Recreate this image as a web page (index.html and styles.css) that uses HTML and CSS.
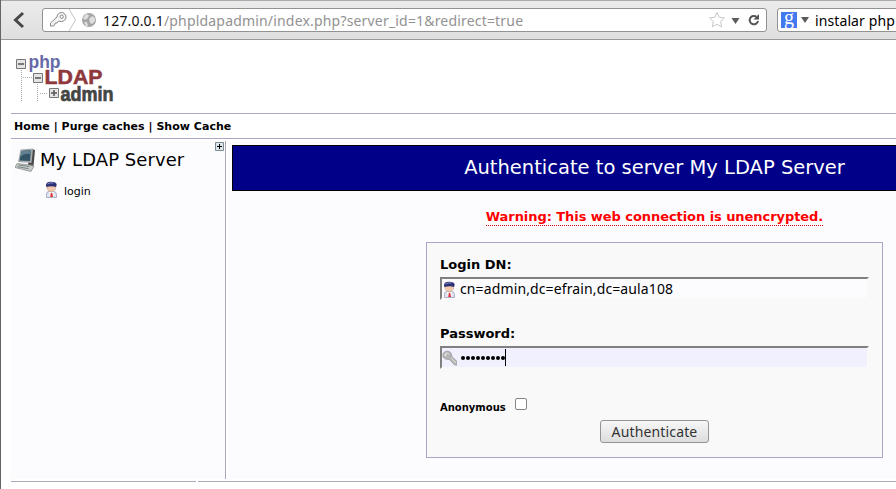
FILE: index.html
```html
<!DOCTYPE html>
<html lang="en">
<head>
<meta charset="utf-8">
<title>phpLDAPadmin</title>
<link rel="stylesheet" href="styles.css">
</head>
<body>
<svg width="0" height="0" class="defs" aria-hidden="true">
  <symbol id="user" viewBox="0 0 14 17">
    <path d="M2.500 16.500V13Q2.500 10.500 5 10.500h4.500q3 0 3 3v3z" fill="#dfe2ef" stroke="#9ca2b9" stroke-width=".8"/>
    <path d="M5 10.500l2.500 1.500L10 10.500l-1 5.500H6z" fill="#fff"/>
    <path d="M6.800 12h1.500l.7 4H6.200z" fill="#dc3437"/>
    <ellipse cx="7.300" cy="6.800" rx="4.400" ry="3.900" fill="#f2c9ad" stroke="#c69b83" stroke-width=".5"/>
    <path d="M2 5Q1.500.700 7 .700T12.700 4L12 6Q7.500 4.500 2.500 6z" fill="#2b3076"/>
    <path d="M3.500 3Q6 1.300 9.500 2" fill="none" stroke="#8b91c9"/>
  </symbol>
</svg>
<div class="window">
  <header class="toolbar">
    <svg class="back" width="14" height="18" viewBox="0 0 14 18"><path d="M11 2L3.500 9L11 16" fill="none" stroke="#474747" stroke-width="3"/></svg>
    <div class="address">
      <svg width="60" height="22" viewBox="0 0 60 22">
        <path d="M18.500 3.500a4.500 4.500 0 0 1 0 9l-3-.3-1.500 1.800-2 .2-.4 2-1.600.8H7.500v-3l6.500-6A4.500 4.500 0 0 1 18.500 3.500z" fill="#f3f3f3" stroke="#888"/>
        <circle cx="18.700" cy="7.700" r="1.600" fill="#fff" stroke="#888"/>
        <path d="M26 0L32.500 11L26 22" fill="none" stroke="#c4c4c4"/>
        <circle cx="46" cy="11" r="7" fill="#a5a5a5"/>
        <path d="M40 9l3-4 3 1-1 3-3 2zM46 10l3-3 3 2v3l-3 3-2-1zM41 13l3 0 1 4-2 0z" fill="#dedede"/>
      </svg>
      <span class="url"><b>127.0.0.1</b>/phpldapadmin/index.php?server_id=1&amp;redirect=true</span>
      <svg class="tools" width="60" height="22" viewBox="0 0 60 22">
        <path d="M11 3.500l2.200 4.700 5.300.700-3.800 3.700.9 5.200-4.600-2.500-4.600 2.500.9-5.200L3.500 8.900l5.300-.7z" fill="#fff" stroke="#c7c7c7"/>
        <path d="M25.500 9h8l-4 6z" fill="#5b5b5b"/>
        <path d="M50.500 7.800A4.200 4.200 0 1 0 52 12" fill="none" stroke="#555" stroke-width="2"/>
        <path d="M53 5v5.500h-5.500z" fill="#555"/>
      </svg>
    </div>
    <div class="search">
      <span class="google">g</span>
      <svg width="8" height="6" viewBox="0 0 8 6"><path d="M0 0h8L4 6z" fill="#5b5b5b"/></svg>
      <span class="query">instalar php</span>
    </div>
  </header>

  <div class="page">
    <div class="brand">
      <svg width="104" height="52" viewBox="0 0 104 52">
        <g fill="none" stroke="#aaa" stroke-dasharray="1 1"><path d="M5.500 14v34M7 23.500h9M21.500 28v20M24 39.500h8"/></g>
        <g class="logo">
          <text class="php" x="12.500" y="14" textLength="32" lengthAdjust="spacingAndGlyphs">php</text>
          <text class="ldap" x="28.500" y="29.500" textLength="58" lengthAdjust="spacingAndGlyphs">LDAP</text>
          <text class="admin" x="44.500" y="47" textLength="53" lengthAdjust="spacingAndGlyphs">admin</text>
        </g>
        <g fill="#e5e5e5" stroke="#777"><path d="M.5 5.500h9v9h-9zM17.500 19.500h9v9h-9zM33.500 34.500h9v9h-9z"/></g>
        <path d="M2 10h6M19 24h6M35 39h6M38 36v6" stroke="#555" stroke-width="1.500"/>
      </svg>
    </div>
    <nav><a>Home</a> | <a>Purge caches</a> | <a>Show Cache</a></nav>
    <div class="columns">
      <aside>
        <svg class="expand" width="9" height="9" viewBox="0 0 9 9"><path d="M.5.500h8v8h-8z" fill="#dce5ea" stroke="#7d8a94"/><path d="M2 4.500h5M4.500 2v5" stroke="#000"/></svg>
        <div class="server">
          <svg width="22" height="24" viewBox="0 0 22 24">
            <path d="M17 1l3 1-1.500 16-3.500 3-2-5z" fill="#4b4a49"/>
            <path d="M5.500 1.500L18 .5 16.500 15 3 14z" fill="#a3abad"/>
            <path d="M6.500 3L16 2 15 13 4.500 12.500z" fill="#335467"/>
            <path d="M6.500 3L16 2 15.500 6Q9 5 5.500 9z" fill="#638191"/>
            <path d="M2 15.500l13 1.500 4 1-3 5.500L0 19.500z" fill="#c5cbc9" stroke="#7c8483" stroke-width=".7"/>
            <path d="M3.500 17l11 1.500M2.500 18.700l11 2" stroke="#7c8583"/>
          </svg>
          <span>My LDAP Server</span>
        </div>
        <div class="login"><svg width="14" height="17"><use href="#user"/></svg><span>login</span></div>
      </aside>
      <main>
        <h1><span>Authenticate to server My LDAP Server</span></h1>
        <div class="notice"><span>Warning: This web connection is unencrypted.</span></div>
        <form>
          <label class="dn">Login DN:</label>
          <div class="field"><svg width="14" height="17"><use href="#user"/></svg><span class="value">cn=admin,dc=efrain,dc=aula108</span></div>
          <label class="pw">Password:</label>
          <div class="field focused">
            <svg width="15" height="16" viewBox="0 0 15 16"><path d="M6 1q4 1 4 5.500l5 5V15h-2.500L7.500 9.500Q3 10 1 7 0 3 3 1.500z" fill="#b5b5b5" stroke="#999" stroke-width=".7"/><path d="M3 3.500q2-1.500 4 .5M9 8l5 5" fill="none" stroke="#e0e0e0"/><circle cx="3.500" cy="5" r="1" fill="#eee"/></svg>
            <span class="dots"><i></i><i></i><i></i><i></i><i></i><i></i><i></i><i></i><i></i></span><span class="caret"></span>
          </div>
          <div class="anonymous"><span>Anonymous</span><i class="check"></i></div>
          <div class="submit"><span>Authenticate</span></div>
        </form>
      </main>
    </div>
    <div class="foot"><i></i><i></i></div>
  </div>
</div>
</body>
</html>
```
FILE: styles.css
```css
* { box-sizing: border-box; }
body { margin: 0; width: 896px; height: 489px; overflow: hidden; background: #fff; font-family: "DejaVu Sans", sans-serif; color: #000; }
svg { display: block; flex: none; }
.defs { position: absolute; }
.window { height: 489px; border-left: 1px solid #656565; overflow: hidden; }
.toolbar { height: 40px; display: flex; align-items: flex-start; border-top: 1px solid #aaa; border-bottom: 1px solid #999; background: linear-gradient(#ebebeb, #dfdfdf); padding: 7px 0 0 11px; white-space: nowrap; }
.back { margin: 3px 16px 0 0; }
.address, .search { height: 24px; flex: none; display: flex; align-items: center; border: 1px solid #929292; border-radius: 3px; background: #fff; font-family: "Noto Sans", sans-serif; font-size: 14px; overflow: hidden; }
.address { width: 725px; margin-right: 10px; }
.url { color: #929292; letter-spacing: .18px; }
.url b { color: #111; font-weight: 400; }
.tools { margin-left: auto; }
.search { width: 180px; padding-left: 3px; }
.google { flex: none; width: 16px; height: 16px; background: #4279ef; color: #fff; font: 20px/10px "Liberation Serif", serif; text-align: center; margin-right: 4px; }
.query { margin-left: 6px; letter-spacing: .1px; }
.page { padding-left: 10px; }
.brand { height: 74px; padding: 14px 0 0 5px; border-bottom: 1px solid #a9a6ca; }
.brand svg { overflow: visible; }
.logo { font-family: "Liberation Sans", sans-serif; font-weight: 700; }
.php { font-size: 17.5px; fill: #6669a7; }
.ldap { font-size: 20px; fill: #8f383c; stroke: #8f383c; stroke-width: .5px; }
.admin { font-size: 20.5px; fill: #424544; stroke: #424544; stroke-width: .7px; }
nav { height: 25px; padding-left: 3px; border-bottom: 1px solid #a9a6ca; font-size: 11px; letter-spacing: .025px; line-height: 26px; font-weight: 700; white-space: pre; }
.columns { display: grid; grid-template-columns: 215px 1fr; gap: 2px; height: 338px; margin-top: 2px; }
aside { position: relative; background: #fcfcff; border-right: 1px solid #aaa8be; }
.expand { position: absolute; top: 1px; right: 1px; }
.server { display: flex; padding: 7px 0 0 4px; font-size: 18px; line-height: 24px; letter-spacing: .06px; gap: 3px; }
.login { display: flex; align-items: center; gap: 6px; padding: 8px 0 0 33px; font-size: 11px; }
.login span { padding-top: 5px; }
main { background: #fcfcff; padding: 4px 0 0 4px; overflow: hidden; }
h1 { margin: 0; width: 845px; height: 46px; border: 1px solid #000; background: #008; color: #fff; font-size: 19.5px; font-weight: 400; line-height: 44px; text-align: center; }
.notice { width: 845px; height: 51px; padding-top: 17px; text-align: center; color: #f00; font-size: 13px; letter-spacing: -.06px; line-height: 17px; font-weight: 700; }
.notice span { display: inline-block; border-bottom: 1px dotted #d00; }
form { width: 457px; height: 216px; margin-left: 194px; padding: 14px 13px 0; border: 1px solid #a9a6ca; background: #f9f9f9; }
label { display: block; font-size: 13px; line-height: 16px; font-weight: 700; height: 20px; }
.field { display: flex; height: 23px; border: 2px solid; border-color: #808080 #f9f9f9 #f9f9f9 #808080; background: #fcfcff; font-family: "Noto Sans", sans-serif; font-size: 14px; line-height: 19px; }
.field svg { margin-top: 2px; margin-right: 4px; }
.value { letter-spacing: .12px; }
.focused { background: #f0f0ff; }
.focused svg { margin-right: 3px; }
.pw { margin-top: 26px; }
.dots { display: flex; gap: 1px; padding: 8px 0 0 .5px; }
.dots i { width: 4px; height: 4px; border-radius: 50%; background: #000; }
.caret { width: 1px; height: 17px; background: #000; margin: 1px 0 0 .5px; }
.anonymous { display: flex; height: 24px; margin-top: 29px; font-size: 10px; font-weight: 700; }
.anonymous span { padding-top: 4px; }
.check { width: 12px; height: 12px; margin-left: 9px; border: 1px solid #858585; border-radius: 2px; background: #fff; }
.submit { width: 109px; height: 23px; margin: -2px 0 0 160px; border: 1px solid #949494; border-radius: 3px; background: linear-gradient(#f7f7f7, #ddd); font: 14px/21px "Noto Sans", sans-serif; letter-spacing: .15px; text-align: center; color: #333; }
.foot { display: flex; gap: 2px; margin-top: 2px; }
.foot i { width: 185px; height: 1px; background: #aaa8be; }
.foot i:last-child { flex: 1; }
```
